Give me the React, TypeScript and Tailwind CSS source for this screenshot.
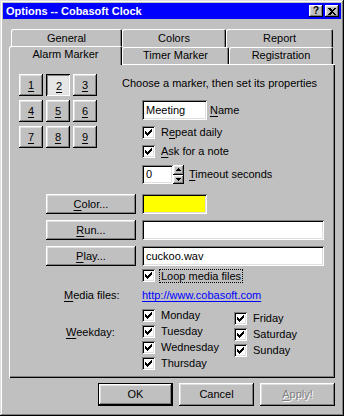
import type { ReactNode } from "react";

const RAISED =
  "bg-[#c0c0c0] shadow-[inset_-1px_-1px_#000,inset_1px_1px_#fff,inset_-2px_-2px_#808080,inset_2px_2px_#dfdfdf]";
const SUNKEN =
  "shadow-[inset_1px_1px_#808080,inset_-1px_-1px_#fff,inset_2px_2px_#000,inset_-2px_-2px_#dfdfdf]";

function U({ children }: { children: ReactNode }) {
  return <span className="underline underline-offset-[2px]">{children}</span>;
}

function CheckBox() {
  const runs: Array<[number, number, number]> = [
    [9, 3, 1], [8, 4, 2], [3, 5, 1], [7, 5, 3], [3, 6, 2],
    [6, 6, 3], [3, 7, 5], [4, 8, 3], [5, 9, 1],
  ];
  return (
    <div className={`w-[13px] h-[13px] shrink-0 bg-white ${SUNKEN}`}>
      <svg width="13" height="13" viewBox="0 0 13 13" shapeRendering="crispEdges">
        {runs.map(([x, y, w], i) => (
          <rect key={i} x={x} y={y} width={w} height={1} fill="#000" />
        ))}
      </svg>
    </div>
  );
}

function Check({ children, className = "" }: { children: ReactNode; className?: string }) {
  return (
    <div className={`flex items-center h-[13px] ${className}`}>
      <CheckBox />
      <span className="ml-[6px]">{children}</span>
    </div>
  );
}

function Btn({ children, className = "", pressed = false }: { children: ReactNode; className?: string; pressed?: boolean }) {
  if (pressed) {
    return (
      <div
        className={`flex items-center justify-center pt-[2px] pl-[2px] bg-[#e6e6e6] shadow-[inset_1px_1px_#000,inset_-1px_-1px_#fff,inset_2px_2px_#808080,inset_-2px_-2px_#dfdfdf] ${className}`}
      >
        {children}
      </div>
    );
  }
  return <div className={`flex items-center justify-center ${RAISED} ${className}`}>{children}</div>;
}

function Tab({ label, w, selected = false, row2 = false }: { label: string; w: number; selected?: boolean; row2?: boolean }) {
  if (selected) {
    return (
      <div
        style={{ width: w }}
        className="relative z-10 -mt-[1px] h-[19px] flex justify-center pt-[2px] bg-[#c0c0c0] rounded-tl-[2px] rounded-tr-[2px] shadow-[inset_1px_1px_#fff,inset_-1px_0_#000,inset_-2px_0_#808080]"
      >
        {label}
      </div>
    );
  }
  return (
    <div
      style={{ width: w }}
      className={`h-full flex justify-center ${row2 ? "pt-[2px]" : "pt-[3px]"} bg-[#c0c0c0] rounded-tl-[2px] rounded-tr-[2px] shadow-[inset_1px_1px_#fff,inset_-1px_0_#000,inset_-2px_0_#808080]`}
    >
      {label}
    </div>
  );
}

function NumPad() {
  const nums = [1, 2, 3, 4, 5, 6, 7, 8, 9];
  return (
    <div className="ml-[10px] mt-[10px] grid grid-cols-[24px_24px_24px] gap-x-[3px] gap-y-[4px] h-fit">
      {nums.map(n => (
        <Btn key={n} pressed={n === 2} className="h-[22px]">
          <U>{n}</U>
        </Btn>
      ))}
    </div>
  );
}

function Spinner() {
  return (
    <div className="flex h-[19px]">
      <div className={`w-[31px] h-full bg-white pl-[4px] flex items-center ${SUNKEN}`}>0</div>
      <div className="flex flex-col w-[11px] h-full">
        <div className={`flex-1 flex items-center justify-center ${RAISED}`}>
          <svg width="5" height="3" viewBox="0 0 5 3" shapeRendering="crispEdges">
            <path d="M2 0h1v1h1v1h1v1H0V2h1V1h1z" fill="#000" />
          </svg>
        </div>
        <div className={`flex-1 flex items-center justify-center ${RAISED}`}>
          <svg width="5" height="3" viewBox="0 0 5 3" shapeRendering="crispEdges">
            <path d="M0 0h5v1H4v1H3v1H2V2H1V1H0z" fill="#000" />
          </svg>
        </div>
      </div>
    </div>
  );
}

function FieldRow({ btn, children, className = "" }: { btn: ReactNode; children: ReactNode; className?: string }) {
  return (
    <div className={`flex h-[20px] ${className}`}>
      <div className="w-[133px] pl-[37px] pr-[6px] shrink-0">
        <Btn className="h-full w-[90px]">{btn}</Btn>
      </div>
      {children}
    </div>
  );
}

export default function App() {
  return (
    <div className="w-[344px] h-[416px] bg-[#c0c0c0] p-[3px] flex flex-col text-[11px] leading-[13px] text-black font-['Liberation_Sans',Arial,sans-serif] shadow-[inset_-1px_-1px_#000,inset_1px_1px_#dfdfdf,inset_-2px_-2px_#808080,inset_2px_2px_#fff] select-none">
      {/* title bar */}
      <div className="h-[16px] bg-[#0000ff] flex items-center justify-between pl-[3px] pr-[2px]">
        <span className="text-white font-bold">Options -- Cobasoft Clock</span>
        <div className="flex gap-[2px]">
          <div className={`w-[14px] h-[12px] flex items-center justify-center font-bold text-[10px] leading-none ${RAISED}`}>?</div>
          <div className={`w-[14px] h-[12px] flex items-center justify-center ${RAISED}`}>
            <svg width="8" height="7" viewBox="0 0 8 7" shapeRendering="crispEdges">
              <path d="M0 0h2l2 2 2-2h2L5 3.5 8 7H6L4 5 2 7H0l3-3.5z" fill="#000" />
            </svg>
          </div>
        </div>
      </div>

      <div className="flex-1 pt-[10px] px-[6px] flex flex-col">
        {/* tabs */}
        <div className="flex h-[18px] ml-[2px]">
          <Tab label="General" w={111} />
          <Tab label="Colors" w={104} />
          <Tab label="Report" w={107} />
        </div>
        <div className="flex h-[17px]">
          <Tab label="Alarm Marker" w={113} selected />
          <Tab label="Timer Marker" w={107} row2 />
          <Tab label="Registration" w={104} row2 />
        </div>

        {/* panel */}
        <div className="w-[326px] h-[314px] flex flex-col shadow-[inset_1px_1px_#fff,inset_-1px_-1px_#000,inset_-2px_-2px_#808080]">
          <div className="flex">
            <NumPad />
            <div className="ml-[25px] flex flex-col">
              <div className="mt-[13px]">Choose a marker, then set its properties</div>
              <div className="ml-[20px] flex flex-col">
                <div className="mt-[10px] flex items-center h-[20px]">
                  <div className={`w-[65px] h-full bg-white pl-[4px] flex items-center ${SUNKEN}`}>Meeting</div>
                  <span className="ml-[3px]"><U>N</U>ame</span>
                </div>
                <Check className="mt-[6px]">R<U>e</U>peat daily</Check>
                <Check className="mt-[6px]"><U>A</U>sk for a note</Check>
                <div className="mt-[7px] flex items-center">
                  <Spinner />
                  <span className="ml-[5px]"><U>T</U>imeout seconds</span>
                </div>
              </div>
            </div>
          </div>

          <FieldRow btn={<><U>C</U>olor...</>} className="mt-[10px]">
            <div className="w-[65px] h-full bg-[#ffff00] shadow-[inset_1px_1px_#808080,inset_-1px_-1px_#fff,inset_2px_2px_#000,inset_-2px_-2px_#dfdfdf]" />
          </FieldRow>
          <FieldRow btn={<><U>R</U>un...</>} className="mt-[6px]">
            <div className={`w-[182px] h-full bg-white ${SUNKEN}`} />
          </FieldRow>
          <FieldRow btn={<><U>P</U>lay...</>} className="mt-[6px]">
            <div className={`w-[182px] h-full bg-white pl-[4px] flex items-center ${SUNKEN}`}>cuckoo.wav</div>
          </FieldRow>

          <div className="mt-[3px] ml-[133px] flex items-center h-[13px]">
            <CheckBox />
            <span className="ml-[4px] px-[1px] h-[14px] leading-[12px] border border-dotted border-black">Loop media files</span>
          </div>

          <div className="mt-[7px] flex h-[13px]">
            <div className="w-[133px] pl-[55px] shrink-0"><U>M</U>edia files:</div>
            <span className="text-[#0000ff] underline underline-offset-[2px]">http://www.cobasoft.com</span>
          </div>

          <div className="mt-[7px] flex">
            <div className="w-[133px] pl-[57px] pt-[17px] shrink-0"><U>W</U>eekday:</div>
            <div className="w-[92px] flex flex-col gap-[3px]">
              <Check>Monday</Check>
              <Check>Tuesday</Check>
              <Check>Wednesday</Check>
              <Check>Thursday</Check>
            </div>
            <div className="mt-[3px] flex flex-col gap-[3px]">
              <Check>Friday</Check>
              <Check>Saturday</Check>
              <Check>Sunday</Check>
            </div>
          </div>
        </div>

        {/* dialog buttons */}
        <div className="mt-[5px] w-[326px] flex justify-end gap-[6px]">
          <div className="w-[75px] h-[23px] border border-black">
            <Btn className="w-full h-full">OK</Btn>
          </div>
          <Btn className="w-[75px] h-[23px]">Cancel</Btn>
          <Btn className="w-[75px] h-[23px] text-[#808080] [text-shadow:1px_1px_0_#fff]">
            <span><U>A</U>pply!</span>
          </Btn>
        </div>
      </div>
    </div>
  );
}
